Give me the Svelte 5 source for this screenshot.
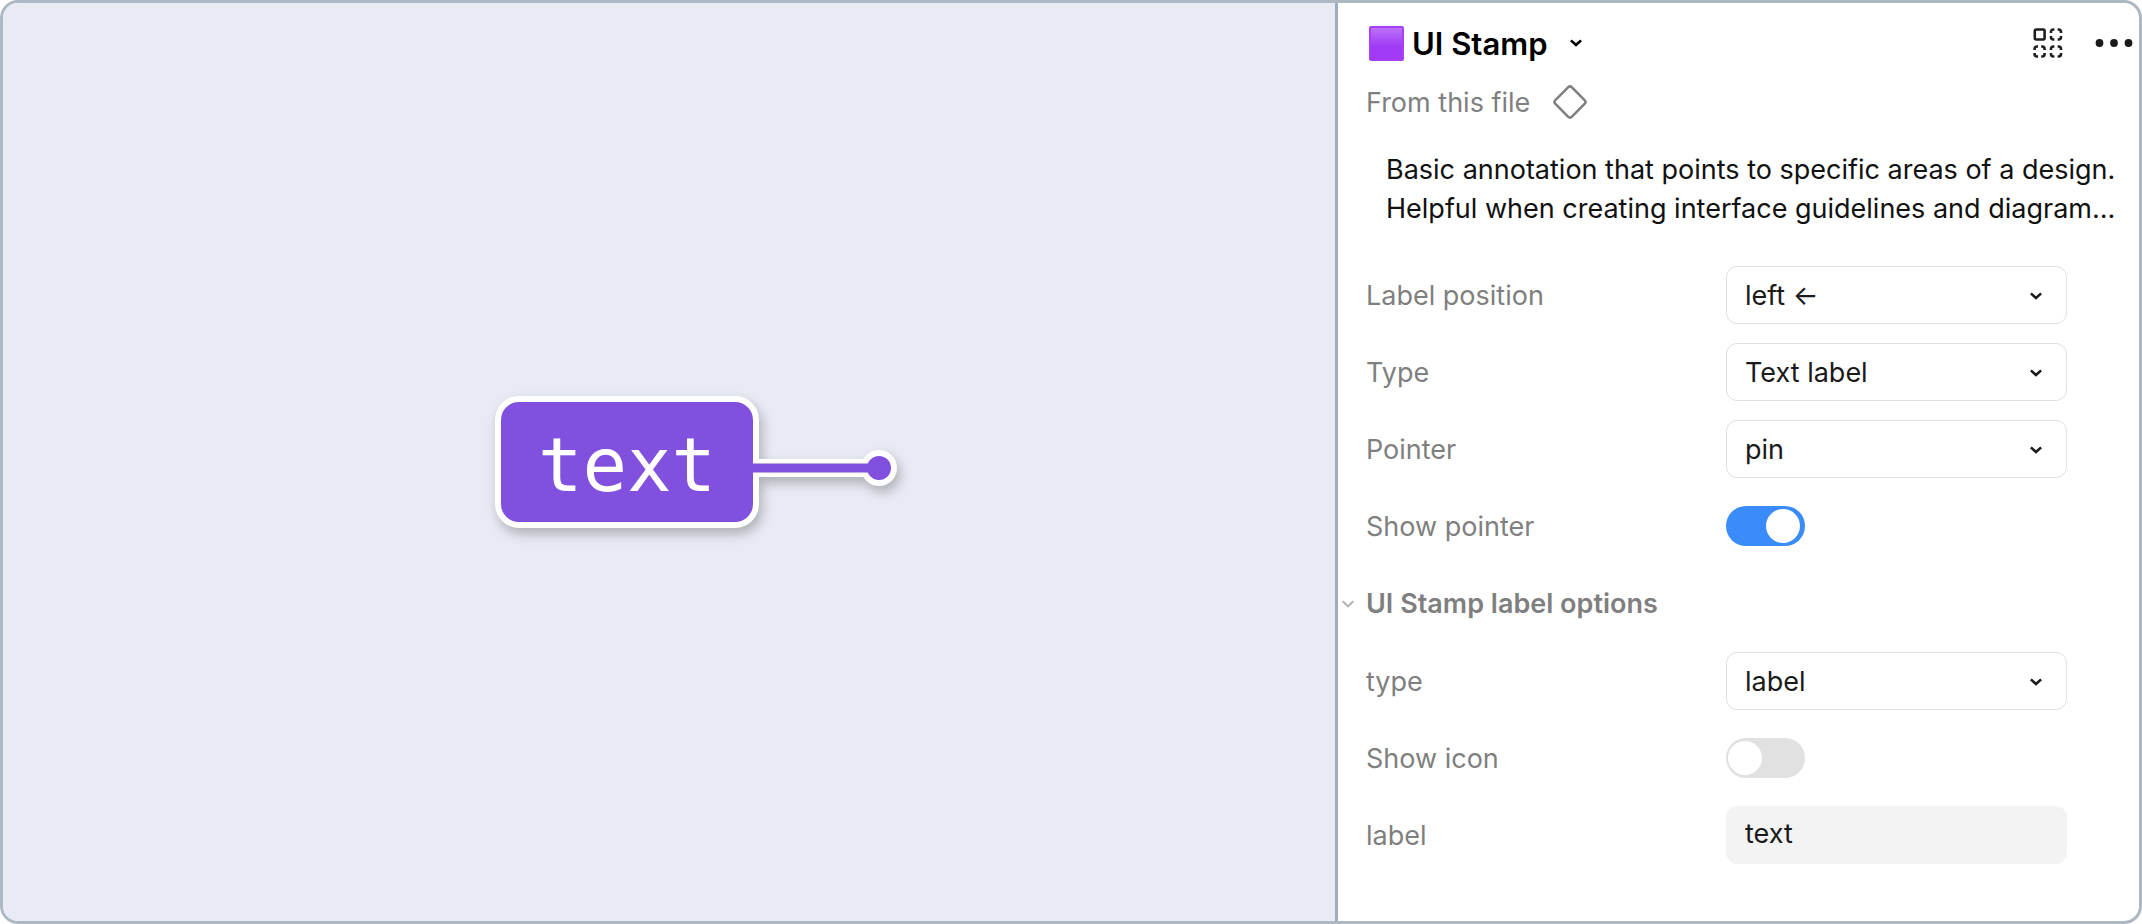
<script>
  let position = $state('left ←');
  let kind = $state('Text label');
  let pointer = $state('pin');
  let labelType = $state('label');
  let showPointer = $state(true);
  let showIcon = $state(false);
  let label = $state('text');
  let open = $state(true);
</script>

{#snippet chevron()}
  <svg class="chevron" viewBox="0 0 12 8" width="12" height="8" aria-hidden="true">
    <path d="M0.9 1.4 L6 6 L11.1 1.4" fill="none" stroke="currentColor" stroke-width="2.6" />
  </svg>
{/snippet}

<main class="frame">
  <section class="canvas" aria-label="Canvas">
    <div class="stamp">
      <div class="tag">{label}</div>
      {#if showPointer}
        <svg class="pin" viewBox="0 0 144 36" width="144" height="36" aria-hidden="true">
          <circle cx="126" cy="18" r="18" fill="#fff" />
          <path d="M0 9 H126 V27 H0 Z" fill="#fff" />
          <path d="M0 13.5 H126 V22.5 H0 Z" fill="#8250df" />
          <circle cx="126" cy="18" r="12" fill="#8250df" />
        </svg>
      {/if}
    </div>
  </section>

  <aside class="panel">
    <header class="head">
      <button class="title" type="button">
        <span class="swatch"></span>
        <span class="name">UI Stamp</span>
        {@render chevron()}
      </button>
      <div class="actions">
        <button type="button" aria-label="Select matching instances">
          <svg viewBox="0 0 30 30" width="30" height="30" fill="none" stroke="#1e1e1e" stroke-width="2.6" aria-hidden="true">
            <rect x="1.8" y="1.5" width="9.8" height="10" rx="1.4" />
            <path id="corners" d="M18 5 V4 Q18 1.5 20.5 1.5 H21.4 M24.6 1.5 H25.5 Q28 1.5 28 4 V5 M28 8 V9 Q28 11.5 25.5 11.5 H24.6 M21.4 11.5 H20.5 Q18 11.5 18 9 V8" />
            <use href="#corners" y="17" />
            <use href="#corners" x="-16.4" y="17" />
          </svg>
        </button>
        <button type="button" aria-label="More options">
          <svg viewBox="0 0 38 8" width="38" height="8" fill="#1a1a1a" aria-hidden="true">
            <circle cx="4.5" cy="4" r="3.9" /><circle cx="19" cy="4" r="3.9" /><circle cx="33.5" cy="4" r="3.9" />
          </svg>
        </button>
      </div>
    </header>

    <div class="source">
      <span>From this file</span>
      <button type="button" aria-label="Go to main component">
        <svg viewBox="0 0 36 36" width="36" height="36" aria-hidden="true">
          <rect x="6.3" y="6.3" width="23.4" height="23.4" rx="2.8" transform="rotate(45 18 18)" fill="none" stroke="#7f7f7f" stroke-width="2.5" />
        </svg>
      </button>
    </div>

    <p class="about">Basic annotation that points to specific areas of a design.<br />Helpful when creating interface guidelines and diagram...</p>

    <form class="props">
      <div class="row">
        <label for="position">Label position</label>
        <div class="select">
          <select id="position" bind:value={position}>
            <option>left ←</option>
            <option>right →</option>
          </select>
          {@render chevron()}
        </div>
      </div>
      <div class="row">
        <label for="kind">Type</label>
        <div class="select">
          <select id="kind" bind:value={kind}>
            <option>Text label</option>
          </select>
          {@render chevron()}
        </div>
      </div>
      <div class="row">
        <label for="pointer">Pointer</label>
        <div class="select">
          <select id="pointer" bind:value={pointer}>
            <option>pin</option>
          </select>
          {@render chevron()}
        </div>
      </div>
      <div class="row">
        <label for="show-pointer">Show pointer</label>
        <input id="show-pointer" class="switch" type="checkbox" bind:checked={showPointer} />
      </div>
      <button class="group" type="button" aria-expanded={open} onclick={() => (open = !open)}>
        <svg viewBox="0 0 12 8" width="12" height="8" aria-hidden="true">
          <path d="M0.8 1.2 L6 6.4 L11.2 1.2" fill="none" stroke="#b0b0b0" stroke-width="2" />
        </svg>
        UI Stamp label options
      </button>
      {#if open}
        <div class="row">
          <label for="label-type">type</label>
          <div class="select">
            <select id="label-type" bind:value={labelType}>
              <option>label</option>
            </select>
            {@render chevron()}
          </div>
        </div>
        <div class="row">
          <label for="show-icon">Show icon</label>
          <input id="show-icon" class="switch" type="checkbox" bind:checked={showIcon} />
        </div>
        <div class="row">
          <label for="label">label</label>
          <input id="label" class="text" type="text" bind:value={label} />
        </div>
      {/if}
    </form>
  </aside>
</main>

<style>
  :global(body) {
    background: #fff;
  }

  .frame {
    box-sizing: border-box;
    min-height: 100vh;
    display: grid;
    grid-template-columns: minmax(0, 5fr) minmax(0, 3fr);
    border: 3px solid #aeb8c2;
    border-radius: 18px;
    overflow: hidden;
    font: 400 27px/39px Inter, sans-serif;
    color: #1a1a1a;
    background: #fff;
  }

  button {
    padding: 0;
    border: 0;
    background: none;
    color: inherit;
    font: inherit;
    display: flex;
    align-items: center;
    cursor: pointer;
  }

  svg {
    display: block;
    flex: none;
  }

  .canvas {
    display: flex;
    align-items: center;
    justify-content: center;
    padding-left: 54px;
    background: #e8ebf4;
    border-right: 3px solid #9facbf;
  }

  .stamp {
    display: flex;
    align-items: center;
    filter: drop-shadow(3px 6px 6px rgba(0, 0, 0, 0.25));
  }

  .tag {
    box-sizing: border-box;
    min-width: 264px;
    height: 132px;
    padding: 0 37px;
    border: 6px solid #fff;
    border-radius: 24px;
    background: #8250df;
    color: #fff;
    font: 400 74px/126px "DejaVu Sans Mono", monospace;
    text-align: center;
  }

  .pin {
    margin: 12px 0 0 -6px;
    position: relative;
  }

  .panel {
    padding: 20px 72px 20px 28px;
  }

  .head {
    display: flex;
    align-items: center;
    justify-content: space-between;
    height: 40px;
    margin-right: -66px;
  }

  .title {
    gap: 8px;
    padding-left: 3px;
    color: #000;
    font-size: 31px;
    font-weight: 600;
  }

  .title .chevron {
    margin-left: 14px;
  }

  .swatch {
    box-sizing: border-box;
    width: 35px;
    height: 35px;
    border: 2px solid #a63ff5;
    border-radius: 2px;
    background: linear-gradient(#bd70fa, #a03af6 60%);
  }

  .actions {
    display: flex;
    align-items: center;
    gap: 32px;
  }

  .source {
    display: flex;
    align-items: center;
    gap: 22px;
    height: 40px;
    margin-top: 19px;
    color: #7f7f7f;
  }

  .about {
    margin: 28px -72px 38px 20px;
    color: #111;
    white-space: nowrap;
  }

  .props {
    display: grid;
    gap: 19px;
  }

  .row {
    display: grid;
    grid-template-columns: minmax(0, 1fr) 341px;
    align-items: center;
    height: 58px;
  }

  label {
    color: #7f7f7f;
  }

  .select {
    position: relative;
  }

  select,
  .text {
    box-sizing: border-box;
    display: block;
    width: 100%;
    height: 58px;
    margin: 0;
    padding: 0 48px 0 18px;
    border: 1px solid #e0e0e0;
    border-radius: 11px;
    background: #fff;
    color: #1a1a1a;
    font: inherit;
    appearance: none;
  }

  .select .chevron {
    position: absolute;
    right: 25px;
    top: 26px;
    pointer-events: none;
  }

  .text {
    padding: 0 18px 3px;
    border-color: #f3f3f3;
    background: #f3f3f3;
  }

  .switch {
    appearance: none;
    box-sizing: border-box;
    display: flex;
    width: 79px;
    height: 40px;
    margin: 0;
    padding: 3px 5px 3px 2px;
    border-radius: 20px;
    background: #e1e1e1;
  }

  .switch::before {
    content: "";
    width: 34px;
    height: 34px;
    border-radius: 50%;
    background: #fff;
  }

  .switch:checked {
    justify-content: flex-end;
    background: #3b8cfb;
  }

  .group {
    gap: 12px;
    height: 59px;
    margin-left: -24px;
    color: #7f7f7f;
    font-weight: 600;
  }
</style>
